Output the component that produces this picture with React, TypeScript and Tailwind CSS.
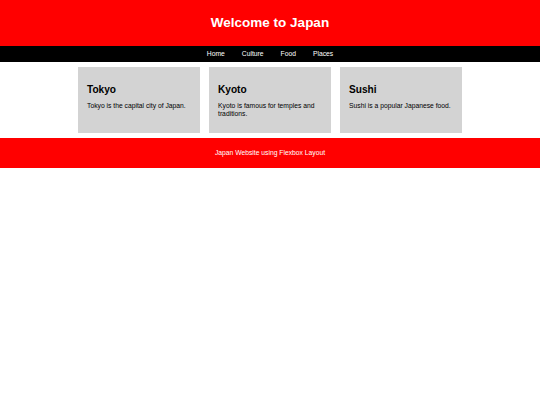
export default function App() {
  const cards = [
    { title: "Tokyo", text: "Tokyo is the capital city of Japan." },
    { title: "Kyoto", text: "Kyoto is famous for temples and traditions." },
    { title: "Sushi", text: "Sushi is a popular Japanese food." },
  ];
  return (
    <div className="w-[540px] min-h-[405px] bg-white text-black" style={{ fontFamily: '"Liberation Sans", Arial, sans-serif' }}>
      <header className="h-[46px] bg-[#ff0000] pt-[15px] text-center">
        <h1 className="m-0 text-[13.5px] leading-[15.5px] font-bold text-white">Welcome to Japan</h1>
      </header>
      <nav className="h-[16px] bg-black flex items-center justify-center gap-[17px] text-[6.75px] leading-[7.8px] text-white">
        <span>Home</span>
        <span>Culture</span>
        <span>Food</span>
        <span>Places</span>
      </nav>
      <main className="flex justify-center py-[0.5px]">
        {cards.map((c) => (
          <div key={c.title} className="w-[122px] m-[4.5px] bg-[#d3d3d3] px-[9px] pt-[9px] pb-[9px]">
            <h2 className="mt-[7.5px] mb-0 text-[10.125px] leading-[11.6px] font-bold">{c.title}</h2>
            <p className="mt-[6.75px] mb-[6.75px] text-[6.75px] leading-[7.8px]">{c.text}</p>
          </div>
        ))}
      </main>
      <footer className="h-[30px] bg-[#ff0000] flex items-center justify-center text-[6.75px] leading-[7.8px] text-white">
        Japan Website using Flexbox Layout
      </footer>
    </div>
  );
}
